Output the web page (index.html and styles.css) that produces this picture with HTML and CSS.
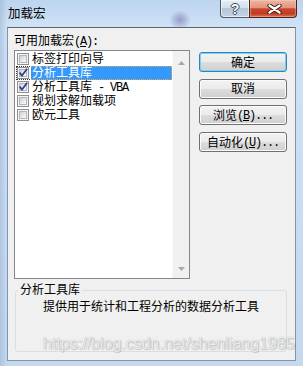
FILE: index.html
```html
<!DOCTYPE html>
<html lang="zh-CN">
<head>
<meta charset="utf-8">
<title>加载宏</title>
<link rel="stylesheet" href="styles.css">
</head>
<body>
<div class="frame">
  <div class="titlebar">
    <div class="title">加载宏</div>
    <div class="caption">
      <div class="cbtn help"><span class="qm">?</span></div>
      <div class="cbtn close">
        <svg width="15" height="10" viewBox="0 0 15 10">
          <path d="M2.5 1.5 L12.5 8.5 M12.5 1.5 L2.5 8.5" stroke="#3a1710" stroke-width="4.2" stroke-linecap="round" fill="none"/>
          <path d="M2.5 1.5 L12.5 8.5 M12.5 1.5 L2.5 8.5" stroke="#ffffff" stroke-width="2.4" stroke-linecap="round" fill="none"/>
        </svg>
      </div>
    </div>
  </div>
  <div class="client">
    <div class="lbl">可用加载宏<span class="hw">(<u>A</u>):</span></div>
    <div class="main">
      <div class="listbox">
        <div class="items">
          <div class="item"><span class="cb"></span><span class="txt">标签打印向导</span></div>
          <div class="item sel"><span class="cb on"><svg width="12" height="12" viewBox="0 0 12 12"><path d="M2.6 5.6 L5 8.6 L10.2 1.8" stroke="#2e4283" stroke-width="1.7" fill="none"/></svg></span><span class="txt">分析工具库</span></div>
          <div class="item"><span class="cb on"><svg width="12" height="12" viewBox="0 0 12 12"><path d="M2.6 5.6 L5 8.6 L10.2 1.8" stroke="#2e4283" stroke-width="1.7" fill="none"/></svg></span><span class="txt">分析工具库<span class="hw"> - VBA</span></span></div>
          <div class="item"><span class="cb"></span><span class="txt">规划求解加载项</span></div>
          <div class="item"><span class="cb"></span><span class="txt">欧元工具</span></div>
        </div>
        <div class="vscroll">
          <svg class="arr" width="7" height="4" viewBox="0 0 7 4"><path d="M3.5 0 L7 4 L0 4 Z" fill="#a8a8a8"/></svg>
          <svg class="arr" width="7" height="4" viewBox="0 0 7 4"><path d="M0 0 L7 0 L3.5 4 Z" fill="#a8a8a8"/></svg>
        </div>
      </div>
      <div class="buttons">
        <div class="btn def">确定</div>
        <div class="btn">取消</div>
        <div class="btn">浏览<span class="hw">(<u>B</u>)...</span></div>
        <div class="btn">自动化<span class="hw">(<u>U</u>)...</span></div>
      </div>
    </div>
    <fieldset class="group">
      <legend>分析工具库</legend>
      <div class="desc">提供用于统计和工程分析的数据分析工具</div>
    </fieldset>
    <div class="watermark">https://blog.csdn.net/shenliang1985</div>
  </div>
</div>
</body>
</html>
```
FILE: styles.css
```css
html, body {
  margin: 0;
  padding: 0;
}
body {
  width: 303px;
  height: 366px;
  overflow: hidden;
  font: 12px "Liberation Sans", "Noto Sans CJK SC", sans-serif;
  color: #000;
}
.frame {
  height: 366px;
  box-sizing: border-box;
  padding: 0 7px 5px 7px;
  display: flex;
  flex-direction: column;
  background:
    radial-gradient(ellipse 11px 10px at 180px 20px, rgba(105, 100, 160, 0.55), rgba(105, 100, 160, 0)),
    linear-gradient(to right, rgba(150, 175, 205, 0.5) 0, rgba(150, 175, 205, 0) 7px),
    linear-gradient(to bottom, #bcd4ee 0, #cfe2f6 26px, #c9ddf2 60%, #c4d8ee 100%);
}
.titlebar {
  height: 27px;
  flex: none;
  display: flex;
  justify-content: space-between;
  align-items: flex-start;
  margin-right: -1px;
}
.title {
  margin-left: 1px;
  padding-top: 7px;
  line-height: 14px;
  font-size: 12.5px;
}
.caption {
  display: flex;
}
.cbtn {
  height: 18px;
  box-sizing: border-box;
  display: flex;
  align-items: center;
  justify-content: center;
}
.help {
  width: 29px;
  border: 1px solid #4a5b70;
  border-top: none;
  border-right: none;
  border-radius: 0 0 0 4px;
  background: linear-gradient(#e6eef7 0, #d3dfec 45%, #b6c6d8 50%, #c4d4e5 100%);
  box-shadow: inset 0 0 0 1px rgba(255, 255, 255, 0.55);
}
.qm {
  font: bold 14px "Liberation Sans", sans-serif;
  line-height: 14px;
  color: #fff;
  text-shadow: 1px 0 0 #3c4658, -1px 0 0 #3c4658, 0 1px 0 #3c4658, 0 -1px 0 #3c4658;
}
.close {
  width: 48px;
  border: 1px solid #4e2219;
  border-top: none;
  border-radius: 0 0 4px 0;
  background: linear-gradient(#ecb6a6 0, #e39378 45%, #c9472d 52%, #c23c23 80%, #d87559 100%);
  box-shadow: inset 0 0 0 1px rgba(255, 220, 200, 0.35);
}
.close svg {
  display: block;
  margin-left: 2px;
}
.client {
  flex: 1;
  position: relative;
  display: flex;
  flex-direction: column;
  background: #f0f0f0;
  border: 1px solid #8394aa;
  border-top-color: #5a6472;
  padding: 6px 8px 0 6px;
}
.hw {
  font-family: "Liberation Mono", monospace;
  letter-spacing: -1.2px;
}
.lbl {
  line-height: 14px;
  margin-bottom: 1px;
}
.main {
  display: flex;
  gap: 9px;
}
.listbox {
  width: 176px;
  height: 229px;
  box-sizing: border-box;
  border: 1px solid #828790;
  background: #fff;
  display: flex;
}
.items {
  flex: 1;
  padding-top: 1px;
}
.item {
  height: 14px;
  box-sizing: border-box;
  border: 1px solid transparent;
  margin-left: 1px;
  display: flex;
  align-items: center;
}
.item.sel {
  border: 1px dotted #333;
}
.cb {
  width: 12px;
  height: 12px;
  flex: none;
  box-sizing: border-box;
  border: 1px solid #8e8f8f;
  background: #f4f4f4;
  margin-right: 2px;
  position: relative;
}
.cb::before {
  content: "";
  position: absolute;
  left: 1px;
  top: 1px;
  right: 1px;
  bottom: 1px;
  box-sizing: border-box;
  border: 1px solid #b3b7bc;
  background: linear-gradient(135deg, #cdd1d6, #eef0f2 70%, #f8f8f8);
}
.cb svg {
  position: absolute;
  left: -1px;
  top: -1px;
}
.txt {
  flex: 1;
  line-height: 12px;
  padding-left: 1px;
  white-space: nowrap;
}
.item.sel .txt {
  background: #3399ff;
  color: #fff;
  margin: -1px -1px -1px 0;
  border: 1px dotted #f0a040;
  border-left: none;
}
.vscroll {
  width: 17px;
  flex: none;
  box-sizing: border-box;
  background: #f0f0f0;
  border-left: 1px solid #f9f9f9;
  display: flex;
  flex-direction: column;
  justify-content: space-between;
  align-items: center;
  padding: 10px 0 7px;
}
.arr {
  display: block;
}
.buttons {
  width: 88px;
  display: flex;
  flex-direction: column;
  gap: 6.7px;
  padding-top: 2px;
}
.btn {
  height: 20px;
  box-sizing: border-box;
  border: 1px solid #707070;
  border-radius: 3px;
  background: linear-gradient(#f2f2f2 0, #ebebeb 50%, #dddddd 50%, #cfcfcf 100%);
  box-shadow: inset 0 0 0 1px #fbfbfb;
  display: flex;
  align-items: center;
  justify-content: center;
  line-height: 12px;
  padding-top: 1px;
}
.btn.def {
  border-color: #3c7fb1;
  box-shadow: inset 0 0 0 1px #6fd6f7;
}
.group {
  margin: 4px 0 0 1px;
  padding: 3px 4px 0 2px;
  border: 1px solid #d5dfe5;
  border-radius: 3px;
  min-width: 0;
}
.group legend {
  padding: 0 2px;
  line-height: 14px;
}
.desc {
  padding-left: 25px;
  line-height: 14px;
  height: 51px;
}
.watermark {
  position: absolute;
  left: 35px;
  top: 308px;
  font: 16px "Liberation Sans", sans-serif;
  line-height: 16px;
  color: rgba(255, 255, 255, 0.8);
  text-shadow: 0 0 1px rgba(0, 0, 0, 0.35), 1px 1px 1px rgba(0, 0, 0, 0.15);
  white-space: nowrap;
}
```
